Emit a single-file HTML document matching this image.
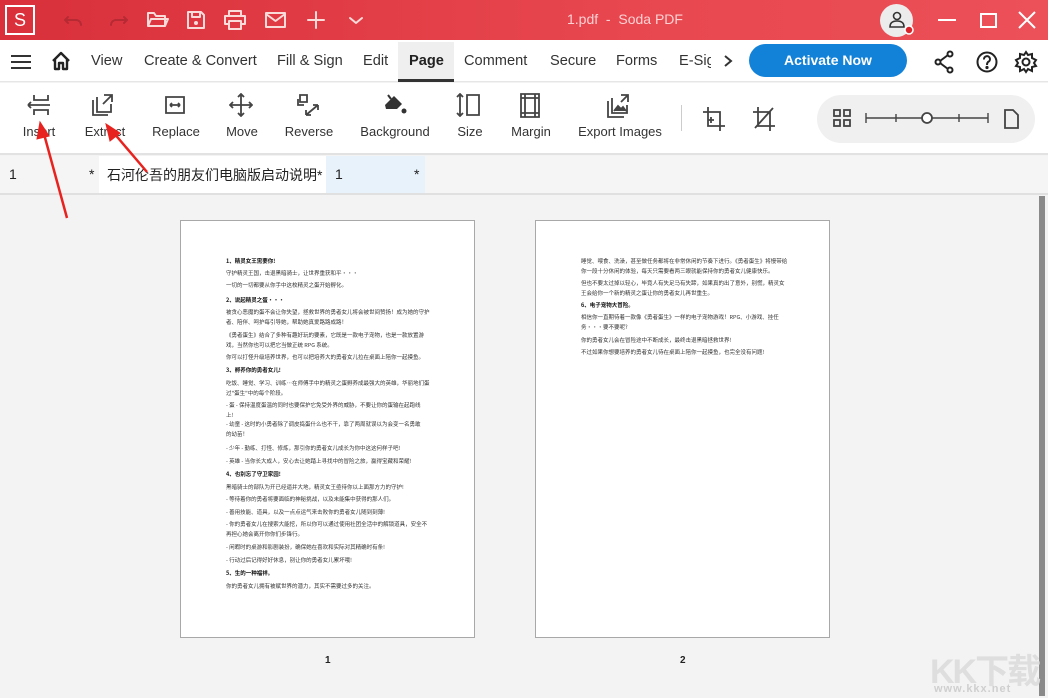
<!DOCTYPE html>
<html><head><meta charset="utf-8"><style>
*{margin:0;padding:0;box-sizing:border-box}
body{width:1048px;height:698px;overflow:hidden;background:#f3f3f3;font-family:"Liberation Sans","Noto Sans CJK SC",sans-serif;position:relative;color:#222}
.abs{position:absolute}
#title{left:0;top:0;width:1048px;height:40px;background:linear-gradient(90deg,#d9303b,#e8474f 60%,#ec5058)}
#menu{left:0;top:40px;width:1048px;height:42px;background:#fff;border-bottom:1px solid #e6e6e6}
.mi{position:absolute;top:13px;font-size:14.6px;color:#333}
#tool{left:0;top:83px;width:1048px;height:72px;background:#fff;border-bottom:2px solid #e2e2e2}
.tl{position:absolute;top:41px;font-size:13px;color:#333;text-align:center;transform:translateX(-50%);white-space:nowrap}
.ic{position:absolute;top:10px;transform:translateX(-50%)}
#tabs{left:0;top:156px;width:1048px;height:39px;background:#f5f5f5;border-bottom:2px solid #e0e0e0;font-size:14px}
.page{position:absolute;top:220px;width:295px;height:418px;background:#fff;border:1px solid #a8a8a8}
.ln{position:absolute;font-size:5.5px;color:#333;white-space:nowrap;font-family:"Noto Sans CJK SC",sans-serif;line-height:6px}
.b{font-weight:bold;color:#111}
svg{display:block}
</style></head><body>
<div id="title" class="abs">
 <div class="abs" style="left:5px;top:5px;width:30px;height:30px;border:2px solid #fff;color:#fff;font-size:18px;text-align:center;line-height:26px">S</div>
 <svg class="abs" style="left:60px;top:8px" width="310" height="24" fill="none" stroke-width="2" stroke-linecap="round" stroke-linejoin="round">
  <path d="M8 9 L5 12 L8 15 M5 12 H16 A5 5 0 0 1 21 17" stroke="#b62a33"/>
  <path d="M64 9 L67 12 L64 15 M67 12 H56 A5 5 0 0 0 51 17" stroke="#b62a33"/>
  <path d="M88 5 H94 L96 8 H105 V18 H88 Z M88 18 L91 11 H108 L105 18" stroke="#fbdada"/>
  <path d="M128 4 H141 L144 7 V20 H128 Z M132 4 V9 H140 V4" stroke="#fbdada"/><circle cx="136" cy="15" r="2" fill="#fbdada"/>
  <path d="M169 8 V3 H181 V8 M165 8 H185 V16 H181 M169 16 H165 V8 M169 13 H181 V21 H169 Z" stroke="#fbdada"/>
  <path d="M206 5 H225 V19 H206 Z M206 6 L215.5 13 L225 6" stroke="#fbdada"/>
  <path d="M256 4 V20 M248 12 H264" stroke="#fbdada"/>
  <path d="M290 10 L296 15 L302 10" stroke="#fbdada"/>
 </svg>
 <div class="abs" style="left:567px;top:11px;font-size:14px;color:#fcd2d4">1.pdf &nbsp;- &nbsp;Soda PDF</div>
 <div class="abs" style="left:880px;top:4px;width:33px;height:33px;border-radius:50%;background:#ececec"></div>
 <svg class="abs" style="left:886px;top:9px" width="30" height="30" fill="none" stroke="#333" stroke-width="1.6"><circle cx="11" cy="7" r="3.5"/><path d="M4 18 Q4 12 11 12 Q18 12 18 18 Z"/><circle cx="23" cy="21" r="4" fill="#d8232a" stroke="#fff" stroke-width="1.5"/></svg>
 <div class="abs" style="left:938px;top:19px;width:18px;height:2px;background:#fff"></div>
 <div class="abs" style="left:980px;top:13px;width:17px;height:15px;border:2px solid #fff"></div>
 <svg class="abs" style="left:1018px;top:11px" width="18" height="18" stroke="#fff" stroke-width="2"><path d="M1 1 L17 17 M17 1 L1 17"/></svg>
</div>
<div id="menu" class="abs">
 <svg class="abs" style="left:11px;top:14px" width="20" height="16" stroke="#333" stroke-width="2"><path d="M0 2H20M0 8H20M0 14H20"/></svg>
 <svg class="abs" style="left:51px;top:11px" width="20" height="20" fill="none" stroke="#222" stroke-width="2.4" stroke-linejoin="round"><path d="M2 10 L10 2 L18 10 M4 8 V18 H8 V12 H12 V18 H16 V8"/></svg>
 <span class="mi" style="left:91px">View</span>
 <span class="mi" style="left:144px">Create &amp; Convert</span>
 <span class="mi" style="left:277px">Fill &amp; Sign</span>
 <span class="mi" style="left:363px">Edit</span>
 <div class="abs" style="left:398px;top:2px;width:56px;height:40px;background:#efefef;border-bottom:3px solid #333"></div>
 <span class="mi" style="left:409px;font-weight:bold;color:#222">Page</span>
 <span class="mi" style="left:464px">Comment</span>
 <span class="mi" style="left:550px">Secure</span>
 <span class="mi" style="left:616px">Forms</span>
 <span class="mi" style="left:679px;width:32px;overflow:hidden;white-space:nowrap">E-Sign</span>
 <svg class="abs" style="left:722px;top:14px" width="12" height="14" fill="none" stroke="#333" stroke-width="2"><path d="M3 2 L9 7 L3 12"/></svg>
 <div class="abs" style="left:749px;top:4px;width:158px;height:33px;border-radius:17px;background:#1282d8;color:#fff;font-weight:bold;font-size:14px;text-align:center;line-height:32px">Activate Now</div>
 <svg class="abs" style="left:934px;top:10px" width="110" height="24" fill="none" stroke="#222" stroke-width="2"><circle cx="16" cy="4" r="2.5"/><circle cx="4" cy="12" r="2.5"/><circle cx="16" cy="20" r="2.5"/><path d="M6 11 L14 5 M6 13 L14 19"/><circle cx="53" cy="12" r="9.5"/><path d="M50 9.5 A3 3 0 1 1 54 12 Q53 13 53 15"/><circle cx="53" cy="17.5" r=".6" fill="#222"/><circle cx="92" cy="12" r="3.5"/><path d="M92 2 L94 5 L98 4 L98 8 L102 10 L100 13 L102 16 L98 17 L98 21 L94 19 L92 22 L90 19 L86 21 L86 17 L82 16 L84 13 L82 10 L86 8 L86 4 L90 5 Z"/></svg>
</div>
<div id="tool" class="abs">
 <svg class="ic" style="left:39px" width="26" height="24" fill="none" stroke="#444" stroke-width="1.8"><path d="M8 2V7H22V2M8 22V17H22V22M2 12H24M2 12L5 9M2 12L5 15"/></svg>
 <svg class="ic" style="left:103px" width="26" height="24" fill="none" stroke="#444" stroke-width="1.8"><path d="M3 7V22H18M7 4V19H21V11M14 2H22V9M22 2L13 11"/></svg>
 <svg class="ic" style="left:175px" width="24" height="24" fill="none" stroke="#444" stroke-width="1.8"><path d="M3 4H21V20H3Z M7 12H17 M7 12L9 10M7 12L9 14M17 12L15 10M17 12L15 14"/></svg>
 <svg class="ic" style="left:241px" width="24" height="24" fill="none" stroke="#444" stroke-width="1.8"><path d="M12 1V23M1 12H23M9 4L12 1L15 4M9 20L12 23L15 20M4 9L1 12L4 15M20 9L23 12L20 15"/></svg>
 <svg class="ic" style="left:309px" width="26" height="24" fill="none" stroke="#444" stroke-width="1.8"><path d="M4 2H11V9H4ZM2 6V12H8M10 22L22 12M10 22V17M10 22H15M22 12H17M22 12V17"/></svg>
 <svg class="ic" style="left:395px" width="26" height="24" fill="#333"><path d="M3 12 L12 3 L20 11 L15 16 H4 Z"/><path d="M9 6 L6 2" stroke="#333" stroke-width="2"/><circle cx="22" cy="18" r="2.5"/></svg>
 <svg class="ic" style="left:469px" width="26" height="24" fill="none" stroke="#444" stroke-width="1.8"><path d="M4 1V23M1 4L4 1L7 4M1 20L4 23L7 20M11 2H23V22H11Z"/></svg>
 <svg class="ic" style="left:530px" width="22" height="26" fill="none" stroke="#444" stroke-width="1.8"><path d="M2 1H20V24H2ZM6 1V24M16 1V24M2 5H20M2 20H20"/></svg>
 <svg class="ic" style="left:619px" width="26" height="26" fill="none" stroke="#444" stroke-width="1.8"><path d="M2 8V24H18M6 5V20H21V12M15 2H22V9M22 2L15 9"/><path d="M8 18L12 13L15 16L17 14L20 18" fill="#444"/></svg>
 <span class="tl" style="left:39px">Insert</span>
 <span class="tl" style="left:105px">Extract</span>
 <span class="tl" style="left:176px">Replace</span>
 <span class="tl" style="left:242px">Move</span>
 <span class="tl" style="left:309px">Reverse</span>
 <span class="tl" style="left:395px">Background</span>
 <span class="tl" style="left:470px">Size</span>
 <span class="tl" style="left:531px">Margin</span>
 <span class="tl" style="left:620px">Export Images</span>
 <div class="abs" style="left:681px;top:22px;width:1px;height:26px;background:#ccc"></div>
 <svg class="abs" style="left:702px;top:23px" width="80" height="26" fill="none" stroke="#444" stroke-width="1.8"><path d="M6 1V20H23M1 6H18V25M9 11V17M6 14H12"/><path d="M56 1V20H73M51 6H68V25M53 22L71 2"/></svg>
 <div class="abs" style="left:817px;top:12px;width:218px;height:48px;border-radius:24px;background:#f0f0f0"></div>
 <svg class="abs" style="left:832px;top:25px" width="200" height="24" fill="none" stroke="#444" stroke-width="1.8"><rect x="2" y="2" width="6" height="6"/><rect x="12" y="2" width="6" height="6"/><rect x="2" y="12" width="6" height="6"/><rect x="12" y="12" width="6" height="6"/><path d="M34 5V15M34 10H90M64 6V14M95 10H156M127 6V14M156 5V15" stroke-width="1.4"/><circle cx="95" cy="10" r="5" fill="#fff"/><path d="M173 2H181L186 7V20H173Z"/></svg>
</div>
<div id="tabs" class="abs">
 <span class="abs" style="left:9px;top:10px">1</span><span class="abs" style="left:89px;top:10px">*</span>
 <div class="abs" style="left:99px;top:0;width:227px;height:37px;background:#fff"></div>
 <span class="abs" style="left:107px;top:9px;font-family:'Liberation Sans','Noto Sans CJK SC',sans-serif">石河伦吾的朋友们电脑版启动说明*</span>
 <div class="abs" style="left:326px;top:0;width:99px;height:37px;background:#e8f2fb"></div>
 <span class="abs" style="left:335px;top:10px">1</span><span class="abs" style="left:414px;top:10px">*</span>
</div>
<div class="abs" style="left:1039px;top:196px;width:6px;height:500px;background:#8a8a8a"></div>

<div class="page" style="left:180px">
 <div class="ln b" style="left:45px;top:37px">1、精灵女王需要你!</div>
 <div class="ln" style="left:45px;top:49px">守护精灵王国，击退黑暗骑士，让世界重获和平···</div>
 <div class="ln" style="left:45px;top:61px">一切的一切都要从你手中这枚精灵之蛋开始孵化。</div>
 <div class="ln b" style="left:45px;top:76px">2、说起精灵之蛋···</div>
 <div class="ln" style="left:45px;top:88px">被贪心恶魔的蛋不会让你失望，拯救世界的勇者女儿将会被世间赞扬！成为她的守护</div>
 <div class="ln" style="left:45px;top:98px">者、陪伴、呵护每引导她，帮助她真爱路路成路！</div>
 <div class="ln" style="left:45px;top:111px">《勇者蛋生》结合了多种有趣好玩的要素，它既是一款电子宠物，也是一款放置游</div>
 <div class="ln" style="left:45px;top:121px">戏，当然你也可以把它当做正统 RPG 系统。</div>
 <div class="ln" style="left:45px;top:133px">你可以打怪升级培养世界，也可以把培养大的勇者女儿拉在桌面上陪你一起摸鱼。</div>
 <div class="ln b" style="left:45px;top:146px">3、孵养你的勇者女儿!</div>
 <div class="ln" style="left:45px;top:159px">吃饭、睡觉、学习、训练…在师傅手中的精灵之蛋孵养成最强大的英雄，华丽地们蛋</div>
 <div class="ln" style="left:45px;top:169px">过"蛋生"中的每个阶段。</div>
 <div class="ln" style="left:45px;top:181px">- 蛋 - 保持温度蛋温的同时也要保护它免受外界的威胁，不要让你的蛋输在起跑线</div>
 <div class="ln" style="left:45px;top:191px">上!</div>
 <div class="ln" style="left:45px;top:200px">- 幼童 - 这时的小勇者除了调皮捣蛋什么也不干，靠了两周就误以为会变一名勇敢</div>
 <div class="ln" style="left:45px;top:210px">的幼苗！</div>
 <div class="ln" style="left:45px;top:224px">- 少年 - 勤练、打怪、修炼，那引你的勇者女儿成长为你中这这何样子吧!</div>
 <div class="ln" style="left:45px;top:237px">- 英雄 - 当你长大成人，安心去让她踏上寻找中的冒险之旅，赢得宝藏和荣耀!</div>
 <div class="ln b" style="left:45px;top:250px">4、也别忘了守卫家园!</div>
 <div class="ln" style="left:45px;top:263px">黑暗骑士的部队为开已经逼并大地，精灵女王亟待你以上面那方力的守护!</div>
 <div class="ln" style="left:45px;top:275px">- 等待着你的勇者将要面临的神秘挑战，以及未能集中获得的那人们。</div>
 <div class="ln" style="left:45px;top:288px">- 善用技能、道具，以及一点点运气来击败你的勇者女儿随到刻薄!</div>
 <div class="ln" style="left:45px;top:300px">- 你的勇者女儿在搜索大能挖，所以你可以通过使用社团全活中的解锁道具，安全不</div>
 <div class="ln" style="left:45px;top:310px">再担心她会离开你你们步锋行。</div>
 <div class="ln" style="left:45px;top:323px">- 闲暇时的桌游和影剧装扮，确保她在喜欢和实际对其精确时有条!</div>
 <div class="ln" style="left:45px;top:336px">- 行动过后记得好好休息，别让你的勇者女儿累坏哦!</div>
 <div class="ln b" style="left:45px;top:349px">5、生的一种福祥。</div>
 <div class="ln" style="left:45px;top:362px">你的勇者女儿拥有被赋世界的潜力，其实不需要过多的关注。</div>
</div>
<div class="page" style="left:535px">
 <div class="ln" style="left:45px;top:37px">睡觉、喂食、洗澡，甚至做任务都将在非常休闲的节奏下进行。《勇者蛋生》将慢带给</div>
 <div class="ln" style="left:45px;top:47px">你一段十分休闲的体验，每天只需要看两三眼就能保持你的勇者女儿健康快乐。</div>
 <div class="ln" style="left:45px;top:59px">但也不要太过掉以轻心，毕竟人有失足马有失蹄，如果真的出了意外，别慌，精灵女</div>
 <div class="ln" style="left:45px;top:69px">王会给你一个新的精灵之蛋让你的勇者女儿再世重生。</div>
 <div class="ln b" style="left:45px;top:81px">6、电子宠物大冒险。</div>
 <div class="ln" style="left:45px;top:93px">相信你一直期待着一款像《勇者蛋生》一样的电子宠物游戏！RPG、小游戏、挂任</div>
 <div class="ln" style="left:45px;top:103px">务···要不要呢?</div>
 <div class="ln" style="left:45px;top:116px">你的勇者女儿会在冒险途中不断成长，最终击退黑暗拯救世界!</div>
 <div class="ln" style="left:45px;top:128px">不过如果你想要培养的勇者女儿待在桌面上陪你一起摸鱼，也完全没有问题!</div>
</div>
<div class="abs" style="left:325px;top:655px;font-size:10px;font-weight:bold">1</div>
<div class="abs" style="left:680px;top:655px;font-size:10px;font-weight:bold">2</div>
<div class="abs" style="left:930px;top:644px;font-size:34px;font-weight:bold;color:#dedede;letter-spacing:-2px;font-family:'Liberation Sans','Noto Sans CJK SC',sans-serif">KK下载</div>
<div class="abs" style="left:934px;top:683px;font-size:11px;color:#cfcfcf;font-weight:bold;letter-spacing:1px">www.kkx.net</div>
<svg class="abs" style="left:0;top:0" width="1048" height="698" fill="#e8231f" stroke="#e8231f" stroke-width="2.5">
 <path d="M67 218 L44 134"/><path d="M40 122 L37 139 L49 136 Z" stroke-width="1"/>
 <path d="M147 172 L113 132"/><path d="M106 124 L110 141 L120 133 Z" stroke-width="1"/>
</svg>
</body></html>
